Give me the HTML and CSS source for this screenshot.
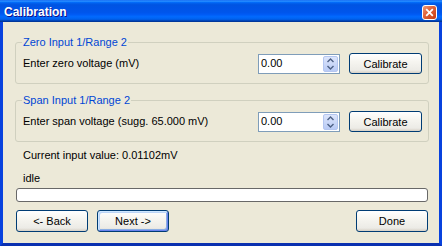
FILE: index.html
```html
<!DOCTYPE html>
<html lang="en">
<head>
    <meta charset="UTF-8">
    <title>Calibration</title>
    <link rel="stylesheet" href="styles.css">
</head>
<body>
<div class="window">
    <div class="titlebar">
        <span class="title">Calibration</span>
        <span class="close">
            <svg width="15" height="15" viewBox="0 0 15 15">
                <defs>
                    <linearGradient id="cl" x1="0" y1="0" x2="1" y2="1">
                        <stop offset="0" stop-color="#F0A080"/>
                        <stop offset="0.4" stop-color="#E2663E"/>
                        <stop offset="1" stop-color="#C2380E"/>
                    </linearGradient>
                </defs>
                <rect x="0.5" y="0.5" width="14" height="14" rx="2.5" fill="url(#cl)" stroke="#fff"/>
                <path d="M4.2 4.2 L10.8 10.8 M10.8 4.2 L4.2 10.8" stroke="#fff" stroke-width="1.8"/>
            </svg>
        </span>
    </div>
    <div class="client">
        <fieldset class="group">
            <legend>Zero Input 1/Range 2</legend>
            <div class="row">
                <span class="prompt">Enter zero voltage (mV)</span>
                <div class="spin">
                    <span class="value">0.00</span>
                    <span class="arrows">
                        <svg width="15" height="18" viewBox="0 0 15 18">
                            <path d="M4.5 7 L7.5 4 L10.5 7 M4.5 11 L7.5 14 L10.5 11" fill="none" stroke="#4D6185" stroke-width="1.4"/>
                        </svg>
                    </span>
                </div>
                <button class="btn cal">Calibrate</button>
            </div>
        </fieldset>
        <fieldset class="group second">
            <legend>Span Input 1/Range 2</legend>
            <div class="row">
                <span class="prompt">Enter span voltage (sugg. 65.000 mV)</span>
                <div class="spin">
                    <span class="value">0.00</span>
                    <span class="arrows">
                        <svg width="15" height="18" viewBox="0 0 15 18">
                            <path d="M4.5 7 L7.5 4 L10.5 7 M4.5 11 L7.5 14 L10.5 11" fill="none" stroke="#4D6185" stroke-width="1.4"/>
                        </svg>
                    </span>
                </div>
                <button class="btn cal">Calibrate</button>
            </div>
        </fieldset>
        <div class="status">Current input value: 0.01102mV</div>
        <div class="state">idle</div>
        <div class="progress"></div>
        <div class="buttons">
            <button class="btn">&lt;- Back</button>
            <button class="btn default">Next -&gt;</button>
            <span class="spacer"></span>
            <button class="btn">Done</button>
        </div>
    </div>
</div>
</body>
</html>
```
FILE: styles.css
```css
body { margin:0; font:11px/13px "Liberation Sans", Arial, sans-serif; color:#000; }
.window { width:442px; height:246px; display:flex; flex-direction:column; }

.titlebar { height:22px; display:flex; align-items:center; padding:2px 5px 0 4px; box-sizing:border-box;
    background:linear-gradient(to bottom, #0058EE 0%, #3593FF 4%, #288EFF 6%, #127DFF 8%, #036FFC 10%, #0262EE 14%, #0057E5 20%, #0054E3 24%, #0055EB 56%, #005BF5 66%, #026AFE 76%, #0062EF 86%, #0052D6 92%, #0040AB 94%, #003092 100%); }
.title { flex:1; color:#fff; font-weight:bold; font-size:12px; text-shadow:1px 1px #0F1089; }
.close { display:flex; }

.client { flex:1; background:#ECE9D8; border:3px solid #0842DE; border-top:none; border-bottom-color:#0A30B0;
    padding:13px 10px 0 12px; display:flex; flex-direction:column; }

.group { margin:0; padding:4px 6px 9px 7px; border:1px solid #D0D0BF; border-radius:3px; min-width:0; }
.group legend { padding:0 1px; margin-left:-1px; line-height:14px; color:#0046D5; }
.second { margin-top:9px; }

.row { display:flex; align-items:center; height:21px; }
.prompt { flex:1; }
.spin { width:82px; height:20px; box-sizing:border-box; border:1px solid #7F9DB9; background:#fff;
    display:flex; align-items:center; justify-content:space-between; padding:0 1px 0 2px; margin-right:9px; }
.arrows { display:flex; width:15px; height:16px; border-radius:2px; overflow:hidden;
    background:linear-gradient(to bottom, #DCE5FB, #B9CBF5); border:1px solid #B4C6F0; box-sizing:border-box; align-items:center; justify-content:center; }
.arrows svg { flex:none; }

.btn { font:11px "Liberation Sans", Arial, sans-serif; color:#000; height:21px; width:73px; padding:0;
    border:1px solid #003C74; border-radius:3px;
    background:linear-gradient(to bottom, #FFFFFF 0%, #F6F5F0 40%, #ECEBE6 85%, #D6D0C5 100%); }
.btn.default { box-shadow:inset 1px 1px #CEE7FF, inset -1px -1px #6982EE, inset 2px 2px #BCD4F6, inset -2px -2px #89ADE4; }

.status { margin:7px 0 0 8px; }
.state { margin:10px 0 0 8px; }
.progress { margin:3px 1px 0 1px; height:14px; box-sizing:border-box; border:1px solid #686868; border-radius:3px; background:#fff; }

.buttons { display:flex; margin:8px 1px 0 1px; gap:9px; }
.buttons .btn { width:72px; height:22px; }
.spacer { flex:1; }
```
